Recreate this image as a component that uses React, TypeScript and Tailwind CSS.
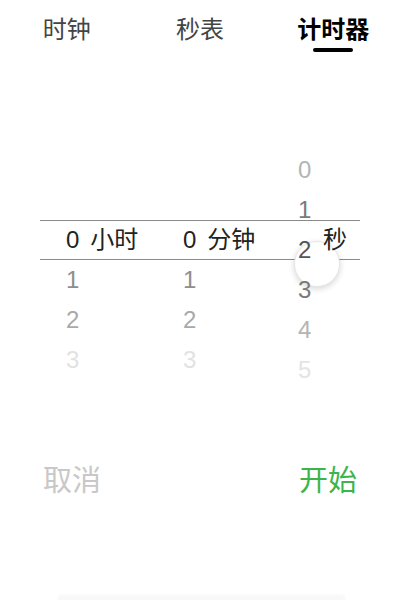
import React from "react";

const tabs = [
  { label: "时钟", active: false },
  { label: "秒表", active: false },
  { label: "计时器", active: true },
];

// wheel rows, with the tint each one gets as it fades away from the band
const hourRows = [
  { value: "1", tone: "text-[#8e8e8e]" },
  { value: "2", tone: "text-[#a9a9a9]" },
  { value: "3", tone: "text-[#e2e2e2]" },
];

const secondRows = [
  { value: "0", tone: "text-[#b4b4b4]" },
  { value: "1", tone: "text-[#7a7a7a]" },
  { value: "2", tone: "text-[#555]" },
  { value: "3", tone: "text-[#7a7a7a]" },
  { value: "4", tone: "text-[#b4b4b4]" },
  { value: "5", tone: "text-[#e4e4e4]" },
];

function Header() {
  return (
    <div className="grid h-14 grid-cols-3">
      {tabs.map((tab) => (
        <div key={tab.label} className="flex flex-col items-center pt-[14px]">
          <span
            className={
              tab.active
                ? "text-[24px] leading-[32px] font-bold text-black"
                : "text-[24px] leading-[32px] text-[#444]"
            }
          >
            {tab.label}
          </span>
          {tab.active && <span className="mt-[2px] h-[4px] w-10 rounded-full bg-black" />}
        </div>
      ))}
    </div>
  );
}

function UnitColumn({ unit }: { unit: string }) {
  return (
    <div className="flex flex-col pt-[80px]">
      <div className="flex h-10 items-center text-[#222]">
        <span>0</span>
        <span className="ml-[11px]">{unit}</span>
      </div>
      {hourRows.map((row) => (
        <div key={row.value} className={`flex h-10 items-center ${row.tone}`}>
          {row.value}
        </div>
      ))}
    </div>
  );
}

function Picker() {
  return (
    <div className="relative mx-10 mt-[84px] h-[260px] overflow-hidden text-[24px]">
      {/* selection band */}
      <div className="absolute inset-x-0 top-[80px] h-10 border-y border-[#8a8a8a]" />

      {/* touch indicator, drawn under the wheel digits */}
      <div className="absolute left-[254px] top-[101px] h-[46px] w-[46px] rounded-full border border-[#e6e6e6] bg-white shadow-[0_2px_6px_rgba(0,0,0,0.16)]" />

      <div className="relative grid h-full grid-cols-[117px_115px_1fr] pl-[26px]">
        <UnitColumn unit="小时" />
        <UnitColumn unit="分钟" />
        <div className="relative flex flex-col pt-[10px]">
          {secondRows.map((row) => (
            <div key={row.value} className={`flex h-10 items-center ${row.tone}`}>
              {row.value}
            </div>
          ))}
          <span className="absolute left-[25px] top-[80px] flex h-10 items-center text-[#222]">秒</span>
        </div>
      </div>
    </div>
  );
}

export default function App() {
  return (
    <div className="flex h-[600px] w-[400px] flex-col overflow-hidden bg-white font-['Liberation_Sans','Noto_Sans_CJK_SC',sans-serif]">
      <Header />
      <Picker />

      <div className="mt-[63px] flex items-center justify-between pl-[43px] pr-[43px] text-[29px] leading-9">
        <button className="text-[#c8c8c8]">取消</button>
        <button className="text-[#3bb54a]">开始</button>
      </div>

      <div className="mt-auto ml-[58px] mr-[55px] h-[4px] rounded-t-md bg-[#f8f8f8] shadow-[0_-1px_3px_rgba(0,0,0,0.04)]" />
    </div>
  );
}
